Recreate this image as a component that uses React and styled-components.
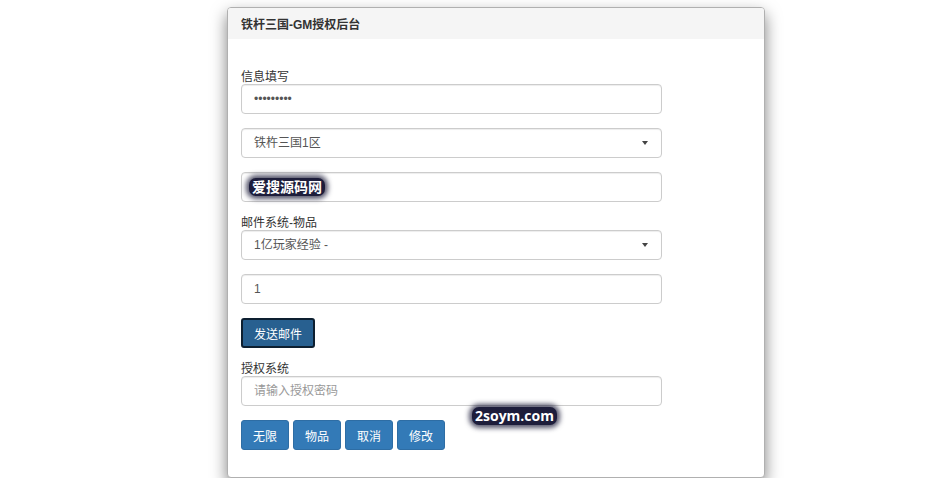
import React from "react";
import styled, { createGlobalStyle } from "styled-components";

const GlobalStyle = createGlobalStyle`
  body {
    margin: 0;
    background: #fff;
    font-family: "Liberation Sans", "Noto Sans CJK SC", sans-serif;
    font-size: 12px;
    color: #333;
  }
`;

const Panel = styled.div`
  position: relative;
  width: 538px;
  box-sizing: border-box;
  margin: 7px 0 0 227px;
  border: 1px solid #b0b0b0;
  border-radius: 4px;
  background: #fff;
  box-shadow: 0 7px 16px rgba(0, 0, 0, 0.5);
`;

const PanelHeading = styled.div`
  height: 31px;
  display: flex;
  align-items: center;
  padding: 0 13px;
  background: #f5f5f5;
  border-radius: 3px 3px 0 0;
  font-weight: bold;
  color: #333;
`;

const PanelBody = styled.div`
  padding: 27px 13px 27px;
  width: 421px;
  display: flex;
  flex-direction: column;
`;

const Label = styled.div`
  height: 14px;
  padding-top: 4px;
  line-height: 14px;
  color: #333;
`;

const Field = styled.input`
  box-sizing: border-box;
  width: 421px;
  height: 30px;
  margin: 0 0 ${(p) => p.$mb ?? 14}px;
  padding: 0 12px;
  border: 1px solid #ccc;
  border-radius: 4px;
  box-shadow: inset 0 1px 1px rgba(0, 0, 0, 0.075);
  font-family: inherit;
  font-size: 12px;
  color: #555;
  outline: none;
  &::placeholder {
    color: #999;
  }
`;

const FieldWrap = styled.div`
  position: relative;
  width: 421px;
`;

const SelectBox = styled.div`
  box-sizing: border-box;
  width: 421px;
  height: 30px;
  margin-bottom: 14px;
  padding: 0 12px 3px;
  display: flex;
  align-items: center;
  justify-content: space-between;
  border: 1px solid #ccc;
  border-radius: 4px;
  box-shadow: inset 0 1px 1px rgba(0, 0, 0, 0.075);
  color: #555;
`;

const Stamp = styled.span`
  position: absolute;
  left: ${(p) => p.$left}px;
  top: ${(p) => p.$top}px;
  padding: 0 3px;
  line-height: 18px;
  font-family: "Open Sans", "Noto Sans CJK SC", sans-serif;
  font-size: 14px;
  font-weight: bold;
  color: #fff;
  background: #1d1d3b;
  border-radius: 7px;
  box-shadow: 0 0 5px 3px rgba(29, 29, 59, 0.75);
  white-space: nowrap;
`;

const Button = styled.button`
  box-sizing: border-box;
  height: 30px;
  padding: 0 11px;
  border: 1px solid ${(p) => (p.$active ? "#0d1f30" : "#2e6da4")};
  border-width: ${(p) => (p.$active ? "2px" : "1px")};
  border-radius: 3px;
  background: ${(p) => (p.$active ? "#286090" : "#337ab7")};
  color: #fff;
  font-family: inherit;
  font-size: 12px;
  cursor: pointer;
`;

const ButtonRow = styled.div`
  display: flex;
  gap: 4px;
`;

const Caret = () => (
  <svg width="8" height="4" viewBox="0 0 8 4" style={{ marginTop: 3 }}>
    <path d="M1 0h6L4 4z" fill="#444" />
  </svg>
);

export default function App() {
  return (
    <>
      <GlobalStyle />
      <Panel>
        <PanelHeading>铁杆三国-GM授权后台</PanelHeading>
        <PanelBody>
          <Label>信息填写</Label>
          <Field type="password" defaultValue="123456789" readOnly />
          <SelectBox>
            <span>铁杵三国1区</span>
            <Caret />
          </SelectBox>
          <FieldWrap>
            <Field $mb={10} defaultValue="" readOnly />
            <Stamp $left={8} $top={6}>爱搜源码网</Stamp>
          </FieldWrap>
          <Label>邮件系统-物品</Label>
          <SelectBox>
            <span>1亿玩家经验 -</span>
            <Caret />
          </SelectBox>
          <Field defaultValue="1" readOnly />
          <div style={{ marginBottom: 10 }}>
            <Button $active>发送邮件</Button>
          </div>
          <Label>授权系统</Label>
          <Field placeholder="请输入授权密码" />
          <ButtonRow>
            <Button>无限</Button>
            <Button>物品</Button>
            <Button>取消</Button>
            <Button>修改</Button>
          </ButtonRow>
        </PanelBody>
        <Stamp $left={244} $top={399}>2soym.com</Stamp>
      </Panel>
    </>
  );
}
